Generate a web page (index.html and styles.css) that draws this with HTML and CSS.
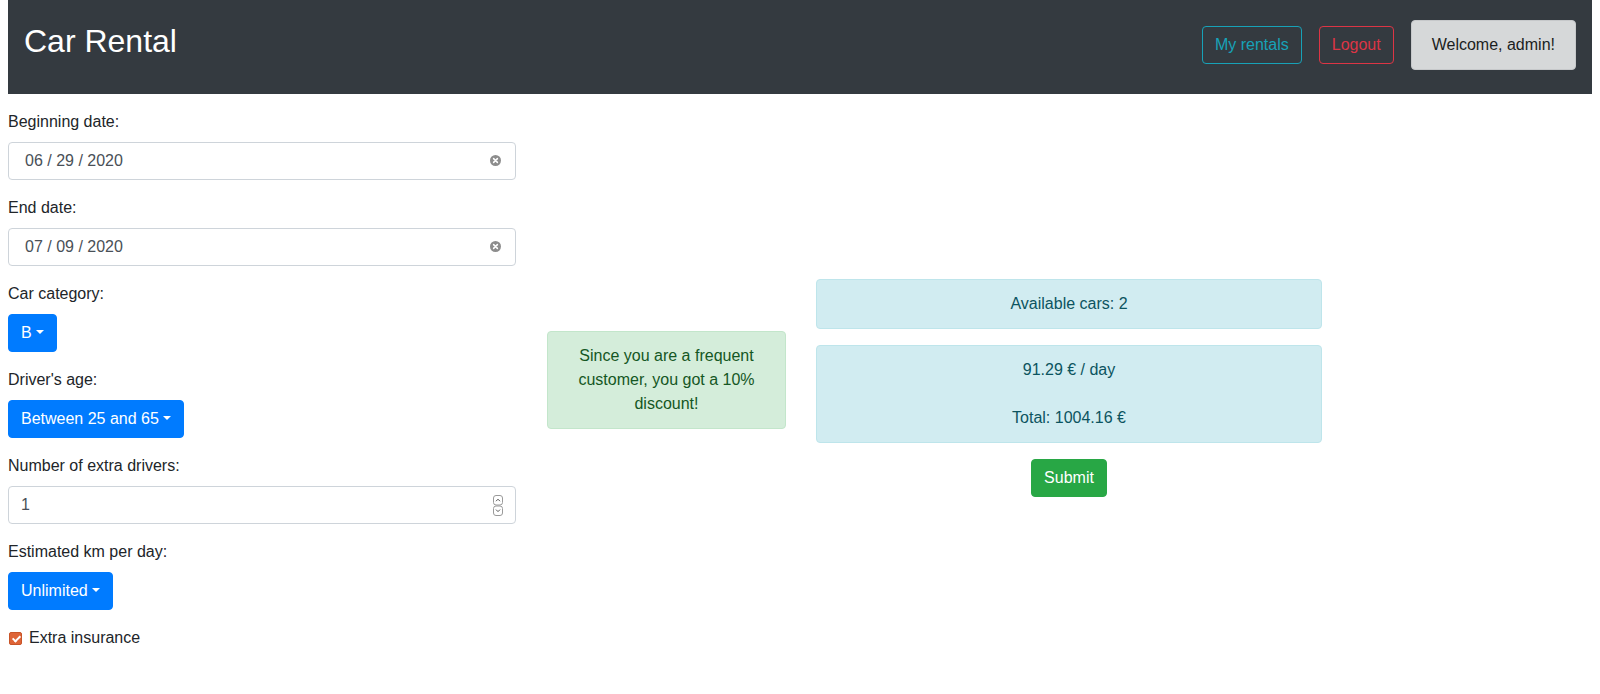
FILE: index.html
```html
<!DOCTYPE html>
<html lang="en">
<head>
<meta charset="utf-8">
<title>Car Rental</title>
<link rel="stylesheet" href="styles.css">
</head>
<body>
<nav class="navbar">
  <h2 class="brand">Car Rental</h2>
  <div class="nav-right">
    <button class="btn btn-outline-info" type="button">My rentals</button>
    <button class="btn btn-outline-danger" type="button">Logout</button>
    <div class="alert alert-dark welcome">Welcome, admin!</div>
  </div>
</nav>
<main class="main">
  <form class="rent-form">
    <div class="form-group">
      <label class="field-label">Beginning date:</label>
      <div class="form-control date-control">
        <span class="date-text">06 / 29 / 2020</span>
        <svg class="clear-icon" width="11" height="11" viewBox="0 0 11 11" aria-hidden="true">
          <circle cx="5.5" cy="5.5" r="5.5" fill="#8d8d8d"/>
          <path d="M3.6 3.6 L7.4 7.4 M7.4 3.6 L3.6 7.4" stroke="#fff" stroke-width="1.5" stroke-linecap="round"/>
        </svg>
      </div>
    </div>
    <div class="form-group">
      <label class="field-label">End date:</label>
      <div class="form-control date-control">
        <span class="date-text">07 / 09 / 2020</span>
        <svg class="clear-icon" width="11" height="11" viewBox="0 0 11 11" aria-hidden="true">
          <circle cx="5.5" cy="5.5" r="5.5" fill="#8d8d8d"/>
          <path d="M3.6 3.6 L7.4 7.4 M7.4 3.6 L3.6 7.4" stroke="#fff" stroke-width="1.5" stroke-linecap="round"/>
        </svg>
      </div>
    </div>
    <div class="form-group">
      <label class="field-label">Car category:</label>
      <button class="btn btn-primary dropdown-toggle" type="button">B</button>
    </div>
    <div class="form-group">
      <label class="field-label">Driver's age:</label>
      <button class="btn btn-primary dropdown-toggle" type="button">Between 25 and 65</button>
    </div>
    <div class="form-group">
      <label class="field-label">Number of extra drivers:</label>
      <div class="form-control number-control">
        <span class="number-text">1</span>
        <svg class="spinner" width="10" height="21" viewBox="0 0 10 21" aria-hidden="true">
          <rect x="0.5" y="0.5" width="9" height="9.5" rx="2.5" fill="#fff" stroke="#9a9a9a"/>
          <rect x="0.5" y="11" width="9" height="9.5" rx="2.5" fill="#fff" stroke="#9a9a9a"/>
          <path d="M3 6.2 L5 4.2 L7 6.2" fill="none" stroke="#555" stroke-width="1"/>
          <path d="M3 14.6 L5 16.6 L7 14.6" fill="none" stroke="#555" stroke-width="1"/>
        </svg>
      </div>
    </div>
    <div class="form-group">
      <label class="field-label">Estimated km per day:</label>
      <button class="btn btn-primary dropdown-toggle" type="button">Unlimited</button>
    </div>
    <div class="form-check">
      <input class="form-check-input" type="checkbox" id="insurance" checked>
      <label class="form-check-label" for="insurance">Extra insurance</label>
    </div>
  </form>

  <div class="alert alert-success discount">Since you are a frequent customer, you got a 10% discount!</div>

  <div class="summary">
    <div class="alert alert-info">Available cars: 2</div>
    <div class="alert alert-info">91.29 € / day<br><br>Total: 1004.16 €</div>
    <button class="btn btn-success" type="button">Submit</button>
  </div>
</main>
</body>
</html>
```
FILE: styles.css
```css
* {
  box-sizing: border-box;
}

html, body {
  background: #fff;
}

body {
  margin: 0 8px;
  font-family: "Liberation Sans", Arial, sans-serif;
  font-size: 16px;
  line-height: 1.5;
  color: #212529;
}

/* Navbar */
.navbar {
  display: flex;
  justify-content: space-between;
  align-items: center;
  background: #343a40;
  padding: 20px 16px 24px;
  height: 94px;
}

.brand {
  margin: 0 0 8px;
  font-size: 32px;
  line-height: 1.2;
  font-weight: 400;
  color: #fff;
}

.nav-right {
  display: flex;
  align-items: center;
}

/* Buttons */
.btn {
  display: inline-block;
  font-family: inherit;
  font-size: 16px;
  line-height: 1.5;
  font-weight: 400;
  padding: 6px 12px;
  border: 1px solid transparent;
  border-radius: 4px;
  background: transparent;
  cursor: pointer;
  text-align: center;
}

.btn-outline-info {
  color: #17a2b8;
  border-color: #17a2b8;
  margin-right: 17px;
}

.btn-outline-danger {
  color: #dc3545;
  border-color: #dc3545;
  margin-right: 17px;
}

.btn-primary {
  color: #fff;
  background: #007bff;
  border-color: #007bff;
}

.btn-success {
  color: #fff;
  background: #28a745;
  border-color: #28a745;
}

.dropdown-toggle::after {
  display: inline-block;
  margin-left: 0.255em;
  vertical-align: 0.255em;
  content: "";
  border-top: 0.3em solid;
  border-right: 0.3em solid transparent;
  border-bottom: 0;
  border-left: 0.3em solid transparent;
}

/* Alerts */
.alert {
  padding: 12px 20px;
  border: 1px solid transparent;
  border-radius: 4px;
}

.alert-dark {
  background: #d6d8d9;
  border-color: #c6c8ca;
  color: #1b1e21;
}

.alert-success {
  background: #d4edda;
  border-color: #c3e6cb;
  color: #155724;
}

.alert-info {
  background: #d1ecf1;
  border-color: #bee5eb;
  color: #0c5460;
  margin-bottom: 16px;
}

/* Main layout */
.main {
  display: flex;
  align-items: center;
  padding-top: 16px;
}

.rent-form {
  width: 508px;
  flex: none;
}

.form-group {
  margin-bottom: 16px;
}

.field-label {
  display: block;
  margin-bottom: 8px;
}

.form-control {
  display: flex;
  align-items: center;
  width: 100%;
  height: 38px;
  padding: 6px 12px;
  border: 1px solid #ced4da;
  border-radius: 4px;
  color: #495057;
  background: #fff;
}

.date-text {
  padding-left: 4px;
}

.clear-icon {
  margin-left: auto;
  margin-right: 2px;
  margin-top: -1px;
}

.spinner {
  margin-left: auto;
  margin-right: 0;
}

.form-check {
  position: relative;
  padding-left: 21px;
}

.form-check-input {
  position: absolute;
  left: 1px;
  top: 6px;
  margin: 0;
  width: 13px;
  height: 13px;
  appearance: none;
  -webkit-appearance: none;
  background: #de6437;
  border: 1px solid #c85428;
  border-radius: 2px;
}

.form-check-input::after {
  content: "";
  position: absolute;
  left: 3.5px;
  top: 1px;
  width: 3px;
  height: 6px;
  border-right: 2px solid #fff;
  border-bottom: 2px solid #fff;
  transform: rotate(45deg);
}

.discount {
  flex: none;
  width: 239px;
  margin-left: 31px;
  text-align: center;
}

.summary {
  flex: none;
  width: 506px;
  margin-left: 30px;
  margin-top: 16px;
  display: flex;
  flex-direction: column;
  align-items: center;
  text-align: center;
}

.summary .alert {
  align-self: stretch;
}
```
